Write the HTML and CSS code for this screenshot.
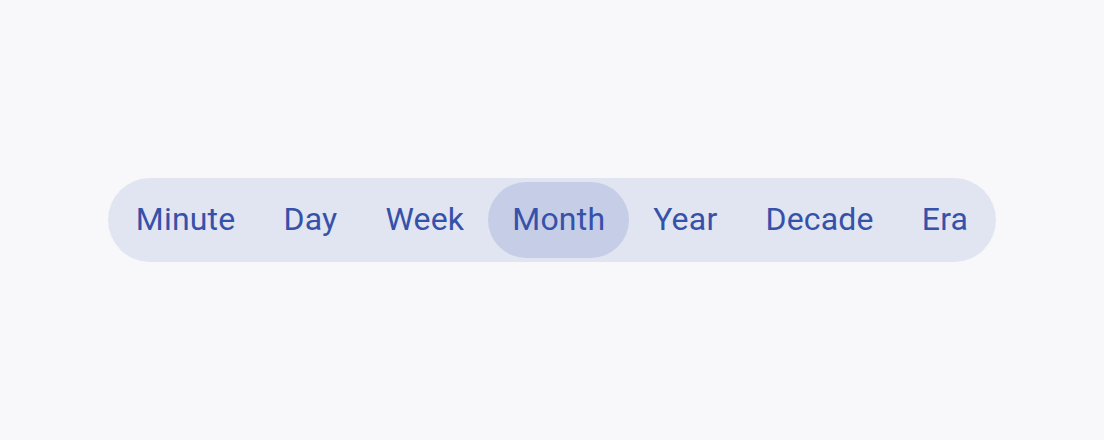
FILE: index.html
```html
<!DOCTYPE html>
<html>
<head>
<meta charset="utf-8">
<link rel="stylesheet" href="styles.css">
</head>
<body>
<div class="stage">
  <div class="seg">
    <button class="item">Minute</button>
    <button class="item">Day</button>
    <button class="item">Week</button>
    <button class="item active">Month</button>
    <button class="item">Year</button>
    <button class="item">Decade</button>
    <button class="item">Era</button>
  </div>
</div>
</body>
</html>
```
FILE: styles.css
```css
html, body {
  margin: 0;
  padding: 0;
  background: #f8f8fa;
}
.stage {
  width: 1104px;
  height: 440px;
  display: flex;
  align-items: center;
  justify-content: center;
}
.seg {
  display: flex;
  padding: 4px;
  background: #e1e5f1;
  border-radius: 42px;
}
.item {
  font-family: Roboto, sans-serif;
  font-size: 32px;
  font-weight: 400;
  letter-spacing: 0.2px;
  color: #3651a9;
  background: transparent;
  border: none;
  height: 76px;
  padding: 0 24px 2px;
  border-radius: 38px;
  line-height: 74px;
  cursor: pointer;
}
.item.active {
  background: #c6cde6;
}
```
